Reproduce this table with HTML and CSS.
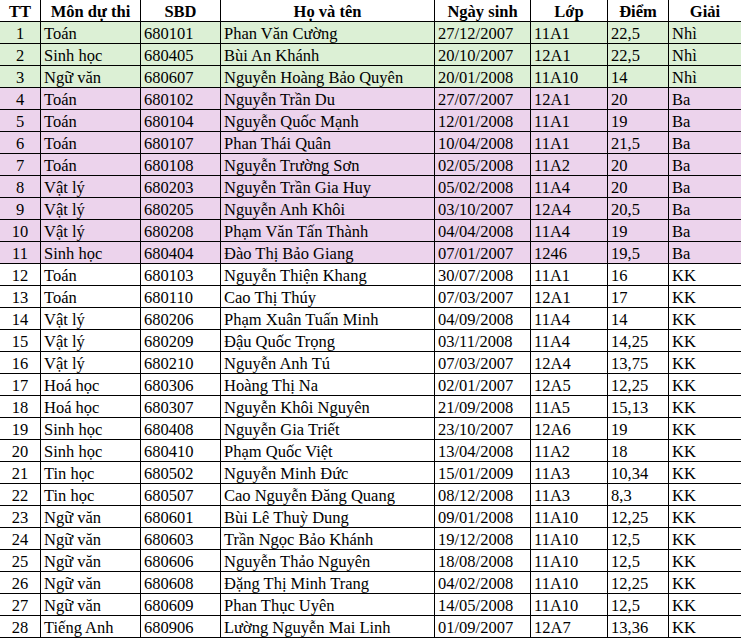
FILE: index.html
```html
<!DOCTYPE html>
<html lang="vi">
<head>
<meta charset="utf-8">
<link rel="stylesheet" href="styles.css">
</head>
<body>
<table class="grid">
<colgroup>
<col class="c-tt"><col class="c-mon"><col class="c-sbd"><col class="c-ten"><col class="c-ns"><col class="c-lop"><col class="c-diem"><col class="c-giai">
</colgroup>
<thead>
<tr><th>TT</th><th>Môn dự thi</th><th>SBD</th><th>Họ và tên</th><th>Ngày sinh</th><th>Lớp</th><th>Điểm</th><th>Giải</th></tr>
</thead>
<tbody>
<tr class="nhi"><td class="tt">1</td><td>Toán</td><td>680101</td><td>Phan Văn Cường</td><td>27/12/2007</td><td>11A1</td><td>22,5</td><td>Nhì</td></tr>
<tr class="nhi"><td class="tt">2</td><td>Sinh học</td><td>680405</td><td>Bùi An Khánh</td><td>20/10/2007</td><td>12A1</td><td>22,5</td><td>Nhì</td></tr>
<tr class="nhi"><td class="tt">3</td><td>Ngữ văn</td><td>680607</td><td>Nguyễn Hoàng Bảo Quyên</td><td>20/01/2008</td><td>11A10</td><td>14</td><td>Nhì</td></tr>
<tr class="ba"><td class="tt">4</td><td>Toán</td><td>680102</td><td>Nguyễn Trần Du</td><td>27/07/2007</td><td>12A1</td><td>20</td><td>Ba</td></tr>
<tr class="ba"><td class="tt">5</td><td>Toán</td><td>680104</td><td>Nguyễn Quốc Mạnh</td><td>12/01/2008</td><td>11A1</td><td>19</td><td>Ba</td></tr>
<tr class="ba"><td class="tt">6</td><td>Toán</td><td>680107</td><td>Phan Thái Quân</td><td>10/04/2008</td><td>11A1</td><td>21,5</td><td>Ba</td></tr>
<tr class="ba"><td class="tt">7</td><td>Toán</td><td>680108</td><td>Nguyễn Trường Sơn</td><td>02/05/2008</td><td>11A2</td><td>20</td><td>Ba</td></tr>
<tr class="ba"><td class="tt">8</td><td>Vật lý</td><td>680203</td><td>Nguyễn Trần Gia Huy</td><td>05/02/2008</td><td>11A4</td><td>20</td><td>Ba</td></tr>
<tr class="ba"><td class="tt">9</td><td>Vật lý</td><td>680205</td><td>Nguyễn Anh Khôi</td><td>03/10/2007</td><td>12A4</td><td>20,5</td><td>Ba</td></tr>
<tr class="ba"><td class="tt">10</td><td>Vật lý</td><td>680208</td><td>Phạm Văn Tấn Thành</td><td>04/04/2008</td><td>11A4</td><td>19</td><td>Ba</td></tr>
<tr class="ba"><td class="tt">11</td><td>Sinh học</td><td>680404</td><td>Đào Thị Bảo Giang</td><td>07/01/2007</td><td>1246</td><td>19,5</td><td>Ba</td></tr>
<tr><td class="tt">12</td><td>Toán</td><td>680103</td><td>Nguyễn Thiện Khang</td><td>30/07/2008</td><td>11A1</td><td>16</td><td>KK</td></tr>
<tr><td class="tt">13</td><td>Toán</td><td>680110</td><td>Cao Thị Thúy</td><td>07/03/2007</td><td>12A1</td><td>17</td><td>KK</td></tr>
<tr><td class="tt">14</td><td>Vật lý</td><td>680206</td><td>Phạm Xuân Tuấn Minh</td><td>04/09/2008</td><td>11A4</td><td>14</td><td>KK</td></tr>
<tr><td class="tt">15</td><td>Vật lý</td><td>680209</td><td>Đậu Quốc Trọng</td><td>03/11/2008</td><td>11A4</td><td>14,25</td><td>KK</td></tr>
<tr><td class="tt">16</td><td>Vật lý</td><td>680210</td><td>Nguyễn Anh Tú</td><td>07/03/2007</td><td>12A4</td><td>13,75</td><td>KK</td></tr>
<tr><td class="tt">17</td><td>Hoá học</td><td>680306</td><td>Hoàng Thị Na</td><td>02/01/2007</td><td>12A5</td><td>12,25</td><td>KK</td></tr>
<tr><td class="tt">18</td><td>Hoá học</td><td>680307</td><td>Nguyễn Khôi Nguyên</td><td>21/09/2008</td><td>11A5</td><td>15,13</td><td>KK</td></tr>
<tr><td class="tt">19</td><td>Sinh học</td><td>680408</td><td>Nguyễn Gia Triết</td><td>23/10/2007</td><td>12A6</td><td>19</td><td>KK</td></tr>
<tr><td class="tt">20</td><td>Sinh học</td><td>680410</td><td>Phạm Quốc Việt</td><td>13/04/2008</td><td>11A2</td><td>18</td><td>KK</td></tr>
<tr><td class="tt">21</td><td>Tin học</td><td>680502</td><td>Nguyễn Minh Đức</td><td>15/01/2009</td><td>11A3</td><td>10,34</td><td>KK</td></tr>
<tr><td class="tt">22</td><td>Tin học</td><td>680507</td><td>Cao Nguyễn Đăng Quang</td><td>08/12/2008</td><td>11A3</td><td>8,3</td><td>KK</td></tr>
<tr><td class="tt">23</td><td>Ngữ văn</td><td>680601</td><td>Bùi Lê Thuỳ Dung</td><td>09/01/2008</td><td>11A10</td><td>12,25</td><td>KK</td></tr>
<tr><td class="tt">24</td><td>Ngữ văn</td><td>680603</td><td>Trần Ngọc Bảo Khánh</td><td>19/12/2008</td><td>11A10</td><td>12,5</td><td>KK</td></tr>
<tr><td class="tt">25</td><td>Ngữ văn</td><td>680606</td><td>Nguyễn Thảo Nguyên</td><td>18/08/2008</td><td>11A10</td><td>12,5</td><td>KK</td></tr>
<tr><td class="tt">26</td><td>Ngữ văn</td><td>680608</td><td>Đặng Thị Minh Trang</td><td>04/02/2008</td><td>11A10</td><td>12,25</td><td>KK</td></tr>
<tr><td class="tt">27</td><td>Ngữ văn</td><td>680609</td><td>Phan Thục Uyên</td><td>14/05/2008</td><td>11A10</td><td>12,5</td><td>KK</td></tr>
<tr><td class="tt">28</td><td>Tiếng Anh</td><td>680906</td><td>Lường Nguyễn Mai Linh</td><td>01/09/2007</td><td>12A7</td><td>13,36</td><td>KK</td></tr>
</tbody>
</table>
</body>
</html>
```
FILE: styles.css
```css
html, body {
  margin: 0;
  padding: 0;
  background: #ffffff;
}
body {
  font-family: "Liberation Serif", "Times New Roman", serif;
  font-size: 16.5px;
  color: #000;
  overflow: hidden;
}
.grid {
  border-collapse: collapse;
  table-layout: fixed;
  margin: -1px 0 0 -1px;
  width: 742px;
}
.c-tt { width: 41px; }
.c-mon { width: 100px; }
.c-sbd { width: 80px; }
.c-ten { width: 214px; }
.c-ns { width: 96px; }
.c-lop { width: 77px; }
.c-diem { width: 61px; }
.c-giai { width: 73px; }
.grid th,
.grid td {
  border: 1px solid #000;
  height: 22px;
  padding: 2px 0 0 3px;
  box-sizing: border-box;
  line-height: 18px;
  white-space: nowrap;
  overflow: hidden;
  text-align: left;
  vertical-align: middle;
}
.grid th {
  font-weight: bold;
  text-align: center;
  padding: 1px 0 0 0;
  line-height: 19px;
}
.grid td.tt {
  text-align: center;
  padding-left: 0;
}
.nhi td { background: #dcf0d5; }
.ba td { background: #ecd3ec; }
```
